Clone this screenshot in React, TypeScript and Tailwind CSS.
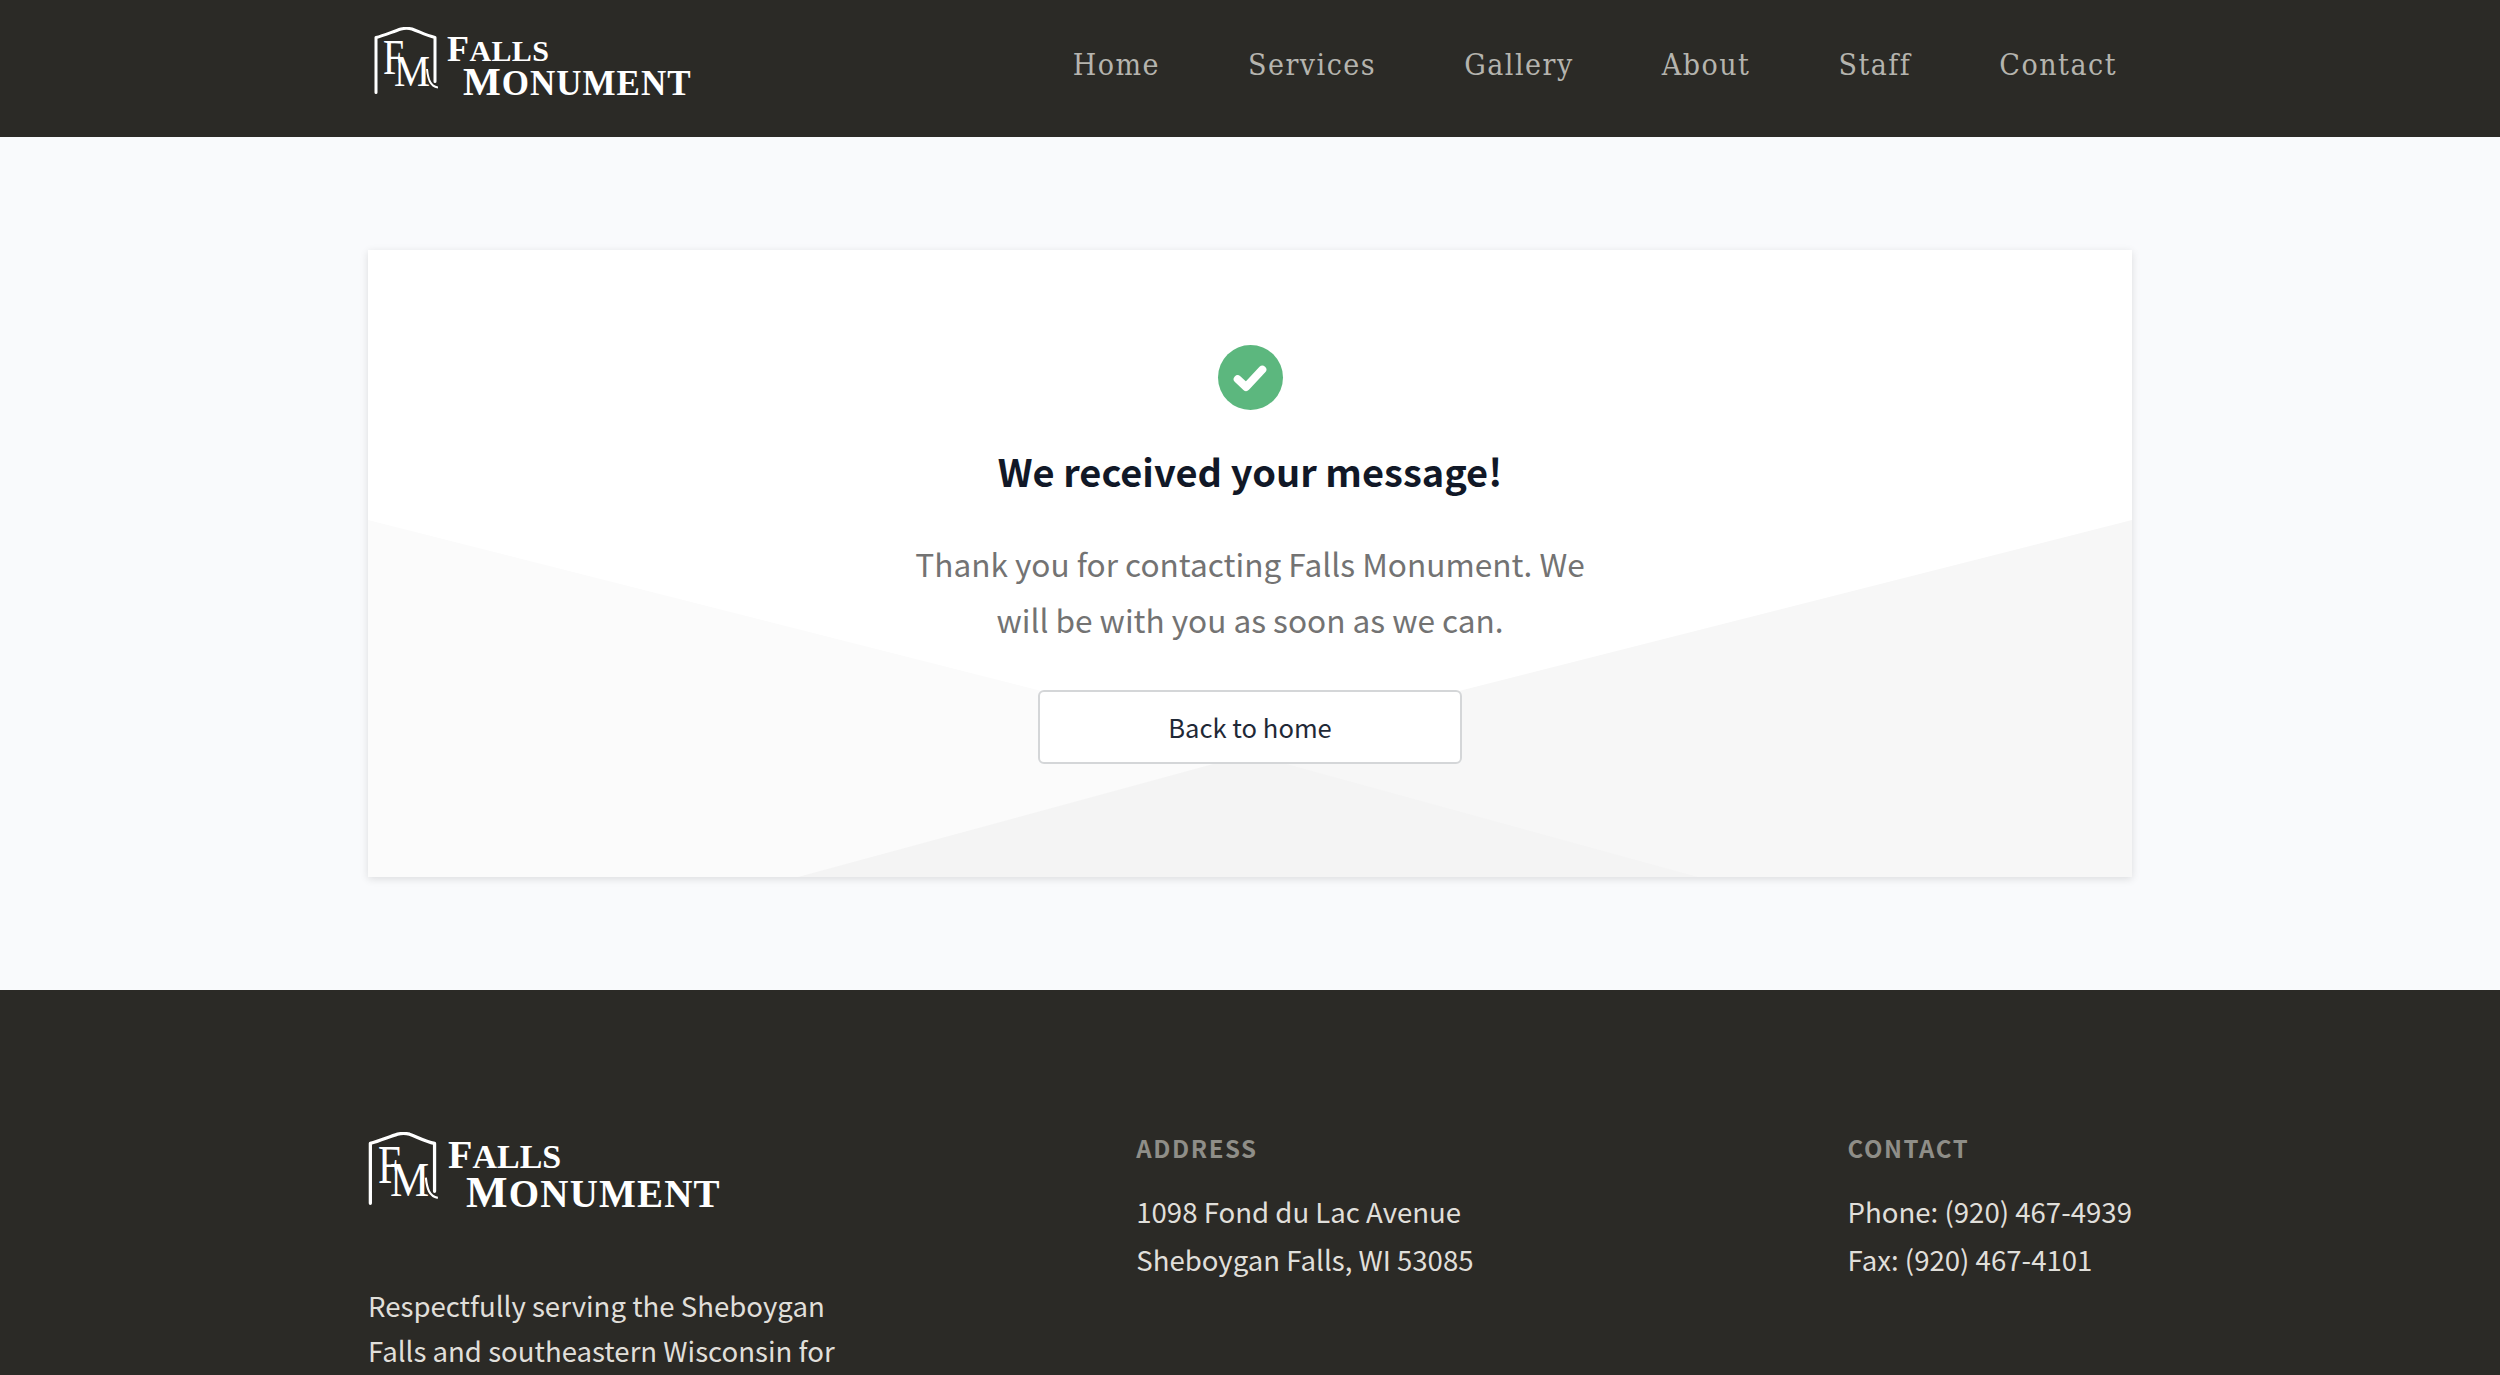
import React from 'react';

const sans = 'font-["Noto_Sans_CJK_SC","Source_Sans_Pro",sans-serif]';

const links = ['Home', 'Services', 'Gallery', 'About', 'Staff', 'Contact'];

const Mark = ({ className }: { className: string }) => (
  <svg viewBox="0 0 64 68" className={className} fill="none">
    <path d="M2 65.5V10.5C10 8.5 19 4.5 27 2C31 1 34 1 38 2C45 4.5 52 8.5 61 10.5V54.5" stroke="#fff" strokeWidth="3" strokeLinecap="round" strokeLinejoin="round" />
    <text x="9" y="47" fontFamily="Liberation Serif" fontSize="50" fill="#fff" textLength="21" lengthAdjust="spacingAndGlyphs">F</text>
    <text x="20" y="59" fontFamily="Liberation Serif" fontSize="44" fill="#fff" textLength="36" lengthAdjust="spacingAndGlyphs">M</text>
    <path d="M53 42C54 52 56 59 64 60.5" stroke="#fff" strokeWidth="2" />
  </svg>
);

const Logo = ({ footer = false }: { footer?: boolean }) => (
  <div className="flex items-start">
    <Mark className={footer ? 'w-[70px] h-[74px] shrink-0' : 'w-[64px] h-[68px] shrink-0'} />
    <div className={footer ? 'ml-[10px] mt-[5px] text-white font-bold font-["Liberation_Serif",serif] leading-[36px]' : 'ml-[9px] mt-[7px] text-white font-bold font-["Liberation_Serif",serif] leading-[31px]'}>
      <div className={footer ? 'text-[34px]' : 'text-[30px] tracking-[0.4px]'}>
        <span className={footer ? 'text-[40px]' : 'text-[36px]'}>F</span>ALLS
      </div>
      <div className={footer ? 'ml-[18px] text-[39px] tracking-[1.2px]' : 'ml-[16px] text-[35px] tracking-[1px]'}>
        <span className={footer ? 'text-[44px]' : 'text-[40px]'}>M</span>ONUMENT
      </div>
    </div>
  </div>
);

export default function App() {
  return (
    <div className={`h-screen overflow-hidden bg-[#f9fafc] ${sans}`}>
      <header className="h-[137px] bg-[#2b2a26]">
        <div className="mx-auto w-[1764px] h-full flex justify-between pl-[6px] pr-[15px]">
          <div className="pt-[27px]">
            <Logo />
          </div>
          <nav className="flex gap-[88px] pt-[45px] text-[30px] leading-[40px] text-[#b5b4ae] font-['DejaVu_Serif_Condensed','Liberation_Serif',serif] tracking-[1.5px]">
            {links.map((link) => (
              <a key={link}>{link}</a>
            ))}
          </nav>
        </div>
      </header>

      <main className="h-[853px] pt-[113px]">
        <section className="relative mx-auto w-[1764px] h-[627px] bg-white shadow-[0_2px_8px_rgba(0,0,0,0.12)] overflow-hidden">
          <svg viewBox="0 0 1764 627" className="absolute inset-0 w-full h-full">
            <polygon points="0,270 882,494 882,627 0,627" fill="#fbfbfb" />
            <polygon points="1764,270 882,494 882,627 1764,627" fill="#f7f7f7" />
            <polygon points="882,504 430,627 1330,627" fill="#f4f4f4" />
          </svg>
          <div className="relative flex flex-col items-center pt-[95px]">
            <div className="w-[65px] h-[65px] rounded-full bg-[#5cb77e] flex items-center justify-center">
              <svg viewBox="0 0 32 32" className="w-[36px] h-[36px]" fill="none">
                <path d="M5 17L12.5 24L27 8.5" stroke="#fff" strokeWidth="7" strokeLinecap="round" strokeLinejoin="round" />
              </svg>
            </div>
            <h1 className="mt-[33px] text-[38px] leading-[56px] font-bold text-[#111827]">We received your message!</h1>
            <p className="mt-[36px] w-[700px] text-center text-[31.6px] leading-[56px] text-[#737373]">
              Thank you for contacting Falls Monument. We will be with you as soon as we can.
            </p>
            <a className="mt-[43px] w-[424px] h-[74px] flex items-center justify-center bg-white rounded-[6px] border-2 border-[#d4d6d8] text-[25.6px] text-[#1f2937]">
              Back to home
            </a>
          </div>
        </section>
      </main>

      <footer className="bg-[#2b2a26] h-[385px]">
        <div className="mx-auto w-[1764px] flex pt-[142px]">
          <div className="w-[770px]">
            <Logo footer />
            <p className="mt-[71px] w-[480px] text-[27.6px] leading-[45px] text-[#e0dfda]">
              Respectfully serving the Sheboygan Falls and southeastern Wisconsin for
            </p>
          </div>
          <div className="w-[713px]">
            <h3 className="text-[24px] leading-[32px] font-semibold tracking-[1.6px] text-[#8f8e88]">ADDRESS</h3>
            <div className="mt-[23px] text-[27.6px] leading-[48px] text-[#e0dfda]">
              <div>1098 Fond du Lac Avenue</div>
              <div>Sheboygan Falls, WI 53085</div>
            </div>
          </div>
          <div className="whitespace-nowrap">
            <h3 className="text-[24px] leading-[32px] font-semibold tracking-[1.6px] text-[#8f8e88]">CONTACT</h3>
            <div className="mt-[23px] text-[27.6px] leading-[48px] text-[#e0dfda]">
              <div>Phone: (920) 467-4939</div>
              <div>Fax: (920) 467-4101</div>
            </div>
          </div>
        </div>
      </footer>
    </div>
  );
}
